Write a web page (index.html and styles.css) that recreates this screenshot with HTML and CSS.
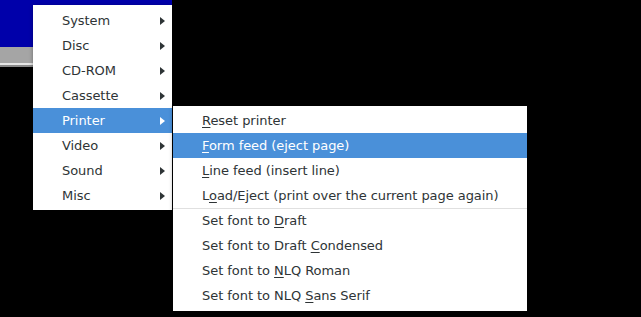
FILE: index.html
```html
<!DOCTYPE html>
<html>
<head>
<meta charset="utf-8">
<link rel="stylesheet" href="styles.css">
</head>
<body>
<div class="desktop">
  <div class="window">
    <div class="win-body"></div>
    <div class="win-status"></div>
    <div class="win-edge"></div>
  </div>

  <ul class="menu menu-main">
    <li class="item"><span class="label">System</span><span class="arrow"></span></li>
    <li class="item"><span class="label">Disc</span><span class="arrow"></span></li>
    <li class="item"><span class="label">CD-ROM</span><span class="arrow"></span></li>
    <li class="item"><span class="label">Cassette</span><span class="arrow"></span></li>
    <li class="item active"><span class="label">Printer</span><span class="arrow"></span></li>
    <li class="item"><span class="label">Video</span><span class="arrow"></span></li>
    <li class="item"><span class="label">Sound</span><span class="arrow"></span></li>
    <li class="item"><span class="label">Misc</span><span class="arrow"></span></li>
  </ul>

  <ul class="menu menu-sub">
    <li class="item"><span class="label"><u>R</u>eset printer</span></li>
    <li class="item active"><span class="label"><u>F</u>orm feed (eject page)</span></li>
    <li class="item"><span class="label"><u>L</u>ine feed (insert line)</span></li>
    <li class="item"><span class="label">L<u>o</u>ad/Eject (print over the current page again)</span></li>
    <li class="sep"></li>
    <li class="item"><span class="label">Set font to <u>D</u>raft</span></li>
    <li class="item"><span class="label">Set font to Draft <u>C</u>ondensed</span></li>
    <li class="item"><span class="label">Set font to <u>N</u>LQ Roman</span></li>
    <li class="item"><span class="label">Set font to NLQ <u>S</u>ans Serif</span></li>
  </ul>
</div>
</body>
</html>
```

FILE: styles.css
```css
html, body {
  margin: 0;
  padding: 0;
  background: #000;
}

.desktop {
  position: relative;
  width: 641px;
  height: 317px;
  overflow: hidden;
  background: #000;
  font-family: "DejaVu Sans", sans-serif;
  font-size: 13px;
}

.window {
  position: absolute;
  left: 0;
  top: 0;
  width: 172px;
  display: flex;
  flex-direction: column;
}

.win-body {
  height: 47px;
  background: #0000aa;
}

.win-status {
  height: 16px;
  background: #a5a5a5;
}

.win-edge {
  height: 2px;
  background: #e6e6e6;
  border-bottom: 2px solid #8a8a8a;
}

.menu {
  position: absolute;
  margin: 0;
  list-style: none;
  background: #fff;
  box-shadow: 0 1px 4px rgba(0, 0, 0, 0.35);
  color: #2e3436;
}

.menu-main {
  left: 33px;
  top: 5px;
  width: 139px;
  padding: 3px 0 2px;
}

.menu-sub {
  left: 173px;
  top: 106px;
  width: 354px;
  padding: 2px 0 3px;
}

.item {
  height: 25px;
  display: flex;
  align-items: center;
  padding: 0 7px 0 29px;
  white-space: nowrap;
}

.item .label {
  flex: 1;
  letter-spacing: -0.05px;
}

.item u {
  text-decoration-thickness: 1px;
  text-underline-offset: 2px;
}

.item.active {
  background: #4a90d9;
  color: #fff;
}

.arrow {
  width: 0;
  height: 0;
  border-top: 4.5px solid transparent;
  border-bottom: 4.5px solid transparent;
  border-left: 5px solid #2e3436;
}

.item.active .arrow {
  border-left-color: #fff;
}

.sep {
  height: 1px;
  margin-bottom: -1px;
  background: #e0e0e0;
}
```
